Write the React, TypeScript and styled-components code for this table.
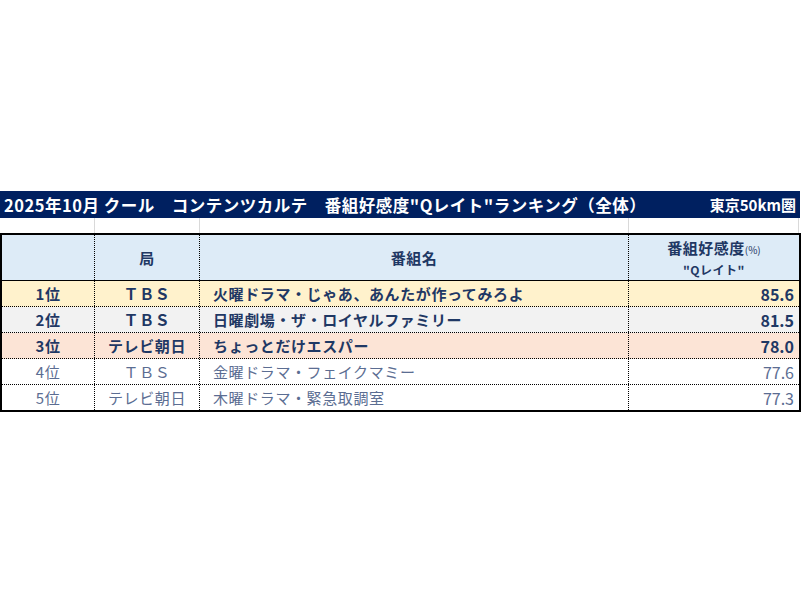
import React from "react";
import styled, { createGlobalStyle, css } from "styled-components";

const Global = createGlobalStyle`
  html, body { margin: 0; padding: 0; background: #ffffff; }
  body { font-family: "Noto Sans CJK JP", "Noto Sans", sans-serif; }
  *, *::before, *::after { box-sizing: border-box; }
`;

const Page = styled.div`
  width: 803px;
  height: 602px;
  padding-top: 191px;
`;

const TitleBar = styled.div`
  width: 800px;
  height: 27px;
  background: #002060;
  color: #ffffff;
  display: flex;
  align-items: center;
  justify-content: space-between;
  padding: 0 4px 0 4px;
  font-weight: 700;
  font-size: 16.5px;
  letter-spacing: 0.5px;
  white-space: pre;
`;

const RightNote = styled.span`
  font-size: 15px;
  letter-spacing: 0;
`;

const cols = css`
  display: grid;
  grid-template-columns: 92px 105px 429px 171px;
`;

const Spacer = styled.div`
  ${cols};
  height: 15px;
  margin-left: 2px;
  width: 799px;
  & > div + div { border-left: 1px solid #d9d9d9; }
  & > div:last-child { border-right: 1px solid #d9d9d9; }
`;

const Table = styled.div`
  width: 801px;
  border: 2px solid #000000;
`;

const Row = styled.div<{ $bg: string; $h: number; $line: "solid" | "dotted" | "none" }>`
  ${cols};
  height: ${(p) => p.$h}px;
  background: ${(p) => p.$bg};
  border-bottom: ${(p) => (p.$line === "none" ? "none" : `1px ${p.$line} #000000`)};
`;

const Cell = styled.div<{ $align?: "left" | "center" | "right"; $strong?: boolean; $first?: boolean }>`
  display: flex;
  align-items: center;
  justify-content: ${(p) => (p.$align === "left" ? "flex-start" : p.$align === "right" ? "flex-end" : "center")};
  padding: ${(p) => (p.$align === "left" ? "0 0 0 13px" : p.$align === "right" ? "0 5px 0 0" : "0")};
  border-left: ${(p) => (p.$first ? "none" : "1px dotted #000000")};
  color: ${(p) => (p.$strong ? "#1f3864" : "#5b6d92")};
  font-weight: ${(p) => (p.$strong ? 700 : 400)};
  font-size: 15px;
  letter-spacing: 0.6px;
  white-space: pre;
  overflow: hidden;
`;

const NumCell = styled(Cell)`
  font-size: 16px;
  letter-spacing: 0;
`;

const HeadCell = styled.div<{ $first?: boolean }>`
  display: flex;
  flex-direction: column;
  align-items: center;
  justify-content: center;
  border-left: ${(p) => (p.$first ? "none" : "1px dotted #000000")};
  color: #1f3864;
  font-weight: 700;
  font-size: 15px;
  letter-spacing: 0.5px;
`;

const HeadLine = styled.span<{ $small?: boolean }>`
  font-size: ${(p) => (p.$small ? "12px" : "15px")};
  line-height: ${(p) => (p.$small ? "18px" : "22px")};
`;

const Unit = styled.span`
  font-size: 10px;
  font-weight: 400;
  letter-spacing: 0;
`;

type Item = { rank: string; station: string; title: string; score: string; bg: string; strong: boolean };

const items: Item[] = [
  { rank: "1位", station: "ＴＢＳ", title: "火曜ドラマ・じゃあ、あんたが作ってみろよ", score: "85.6", bg: "#fff2cc", strong: true },
  { rank: "2位", station: "ＴＢＳ", title: "日曜劇場・ザ・ロイヤルファミリー", score: "81.5", bg: "#f2f2f2", strong: true },
  { rank: "3位", station: "テレビ朝日", title: "ちょっとだけエスパー", score: "78.0", bg: "#fce4d6", strong: true },
  { rank: "4位", station: "ＴＢＳ", title: "金曜ドラマ・フェイクマミー", score: "77.6", bg: "#ffffff", strong: false },
  { rank: "5位", station: "テレビ朝日", title: "木曜ドラマ・緊急取調室", score: "77.3", bg: "#ffffff", strong: false },
];

export default function App() {
  return (
    <Page>
      <Global />
      <TitleBar>
        <span>{"2025年10月 クール　コンテンツカルテ　番組好感度\"Qレイト\"ランキング（全体）"}</span>
        <RightNote>東京50km圏</RightNote>
      </TitleBar>
      <Spacer>
        <div />
        <div />
        <div />
        <div />
      </Spacer>
      <Table>
        <Row $bg="#ddebf7" $h={46} $line="solid">
          <HeadCell $first />
          <HeadCell>
            <HeadLine>局</HeadLine>
          </HeadCell>
          <HeadCell>
            <HeadLine>番組名</HeadLine>
          </HeadCell>
          <HeadCell>
            <HeadLine>
              番組好感度<Unit>(%)</Unit>
            </HeadLine>
            <HeadLine $small>"Qレイト"</HeadLine>
          </HeadCell>
        </Row>
        {items.map((it, i) => (
          <Row key={it.rank} $bg={it.bg} $h={i === items.length - 1 ? 25 : 26} $line={i === items.length - 1 ? "none" : "dotted"}>
            <Cell $first $strong={it.strong}>{it.rank}</Cell>
            <Cell $strong={it.strong}>{it.station}</Cell>
            <Cell $align="left" $strong={it.strong}>{it.title}</Cell>
            <NumCell $align="right" $strong={it.strong}>{it.score}</NumCell>
          </Row>
        ))}
      </Table>
    </Page>
  );
}
